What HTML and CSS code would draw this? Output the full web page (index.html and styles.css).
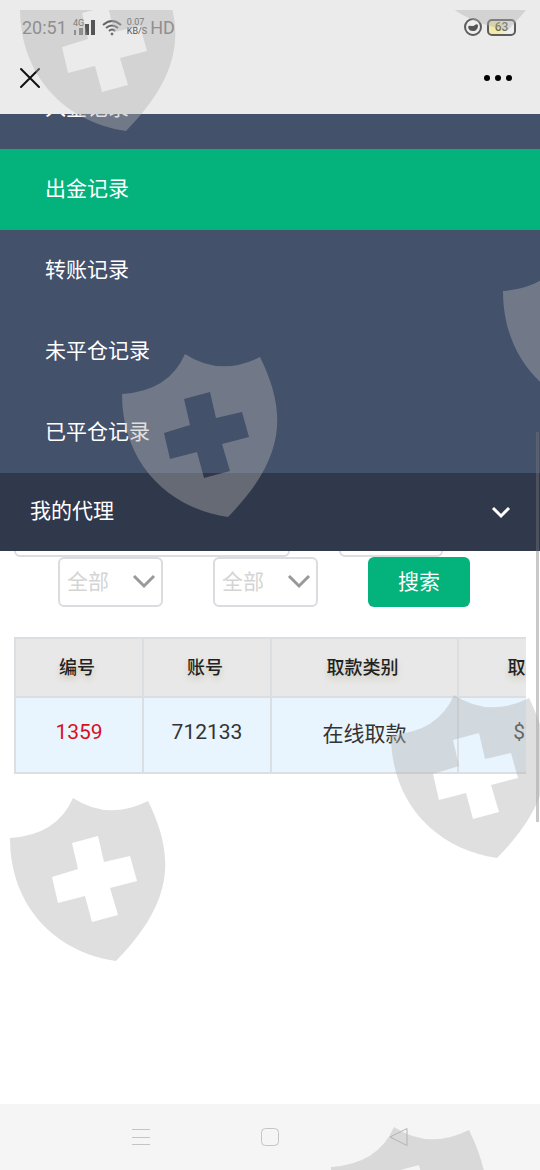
FILE: index.html
```html
<!DOCTYPE html>
<html lang="zh-CN">
<head>
    <meta charset="UTF-8">
    <meta name="viewport" content="width=device-width, initial-scale=1.0">
    <title>出金记录</title>
    <link rel="stylesheet" href="styles.css">
</head>
<body>
    <div class="status">
        <span class="time">20:51</span>
        <svg class="signal" width="24" height="18" viewBox="0 0 24 18">
            <text x="0" y="8" class="tiny">4G</text>
            <path d="M1 12h2v5H1zM6 10h4v7H6z" fill="#777"/>
            <path d="M12 6h4v11h-4zM18 2h4v15h-4z" fill="#555"/>
        </svg>
        <svg class="wifi" width="20" height="17" viewBox="0 0 20 17" fill="none" stroke="#666" stroke-width="2">
            <path d="M1 6Q10-2 19 6M4 9Q10 4 16 9M7 12Q10 9 13 12"/>
            <circle cx="10" cy="15" r="1" fill="#666" stroke-width="1"/>
        </svg>
        <span class="speed"><span>0.07</span><span>KB/S</span></span>
        <span class="hd">HD</span>
        <span class="space"></span>
        <svg class="eye" width="18" height="18" viewBox="0 0 18 18">
            <circle cx="9" cy="9" r="8" fill="#eee" stroke="#5c5c5c" stroke-width="2"/>
            <path d="M4 9C5 7 7 8 9 8C11 8 12 5 14 7C14 11 12 13 9 13S5 12 4 9Z" fill="#555"/>
        </svg>
        <span class="battery">63</span>
    </div>
    <header class="topbar">
        <button type="button" aria-label="关闭">
            <svg width="22" height="22" viewBox="0 0 22 22" stroke="#111" stroke-width="2" stroke-linecap="round">
                <path d="M2 2L20 20M20 2L2 20"/>
            </svg>
        </button>
        <button type="button" aria-label="更多">
            <svg width="28" height="8" viewBox="0 0 28 8">
                <circle cx="3" cy="4" r="3"/>
                <circle cx="14" cy="4" r="3"/>
                <circle cx="25" cy="4" r="3"/>
            </svg>
        </button>
    </header>
    <nav class="menu">
        <div class="submenu">
            <a href="#">入金记录</a>
            <a href="#" class="active">出金记录</a>
            <a href="#">转账记录</a>
            <a href="#">未平仓记录</a>
            <a href="#">已平仓记录</a>
        </div>
        <a href="#" class="group">
            <span>我的代理</span>
            <svg width="20" height="14" viewBox="0 0 20 14" fill="none" stroke="#fff" stroke-width="3">
                <path d="M2 3L10 11L18 3"/>
            </svg>
        </a>
    </nav>
    <main>
        <form>
            <div class="row first">
                <input type="text" class="range" aria-label="日期">
                <input type="text" class="short" aria-label="账号">
            </div>
            <div class="row second">
                <div class="select">
                    <select aria-label="取款类别"><option>全部</option></select>
                    <svg width="24" height="16" viewBox="0 0 24 16" fill="none" stroke="#999" stroke-width="3">
                        <path d="M2 3L12 13L22 3"/>
                    </svg>
                </div>
                <div class="select">
                    <select aria-label="状态"><option>全部</option></select>
                    <svg width="24" height="16" viewBox="0 0 24 16" fill="none" stroke="#999" stroke-width="3">
                        <path d="M2 3L12 13L22 3"/>
                    </svg>
                </div>
                <button type="submit" class="search">搜索</button>
            </div>
        </form>
        <div class="table-wrap">
            <table>
                <thead>
                    <tr>
                        <th class="col-s">编号</th>
                        <th class="col-s">账号</th>
                        <th class="col-l">取款类别</th>
                        <th class="col-m">取款金额</th>
                    </tr>
                </thead>
                <tbody>
                    <tr>
                        <td class="red">1359</td>
                        <td>712133</td>
                        <td>在线取款</td>
                        <td>$20.00</td>
                    </tr>
                </tbody>
            </table>
        </div>
    </main>
    <footer class="keys">
        <button type="button" aria-label="菜单">
            <svg width="20" height="20" viewBox="0 0 20 20" stroke="#c4c4c4" stroke-width="1">
                <path d="M1 2.5H19M1 10.5H19M1 17.5H19"/>
            </svg>
        </button>
        <button type="button" aria-label="主页">
            <svg width="20" height="20" viewBox="0 0 20 20" fill="none" stroke="#c4c4c4" stroke-width="1">
                <rect x="1.5" y="1.5" width="17" height="17" rx="4"/>
            </svg>
        </button>
        <button type="button" aria-label="返回">
            <svg width="20" height="20" viewBox="0 0 20 20" fill="none" stroke="#b4b4b4" stroke-width="1">
                <path d="M18 1.5V18.5L1 10Z"/>
            </svg>
        </button>
    </footer>

    <div class="scrollbar"></div>
    <div class="marks" aria-hidden="true">
        <svg width="0" height="0">
            <symbol id="shield" viewBox="0 0 160 166">
                <path fill-rule="evenodd" d="M0 40Q47 37 63 0Q98 23 138 3C164 56 166 102 106 163C45 154 0 108 0 40ZM62 45L68 71L42 79L48 105L75 98L82 124L108 117L100 90L127 83L120 58L94 64L88 38Z"/>
            </symbol>
        </svg>
        <svg class="mark m1"><use href="#shield"/></svg>
        <svg class="mark m2"><use href="#shield"/></svg>
        <svg class="mark m3"><use href="#shield"/></svg>
        <svg class="mark m4"><use href="#shield"/></svg>
        <svg class="mark m5"><use href="#shield"/></svg>
        <svg class="mark m6"><use href="#shield"/></svg>
        <svg class="mark m7"><use href="#shield"/></svg>
    </div>
</body>
</html>
```
FILE: styles.css
```css
* {
    box-sizing: border-box;
}
body {
    position: relative;
    display: flex;
    flex-direction: column;
    min-height: 100vh;
    margin: 0;
    background: #fff;
    color: #333;
    font-family: Roboto, "Noto Sans CJK SC", sans-serif;
    font-size: 21px;
    overflow-x: hidden;
}
button {
    padding: 0;
    border: none;
    background: none;
    cursor: pointer;
}
svg {
    display: block;
}
a {
    color: #fff;
    text-decoration: none;
}

/* status bar */
.status {
    display: flex;
    align-items: center;
    height: 54px;
    padding: 0 24px 0 22px;
    background: #ebebeb;
    color: #777;
    font-size: 18px;
}
.signal {
    margin-left: 6px;
}
.tiny {
    font-size: 9px;
    fill: #555;
}
.wifi {
    margin-left: 5px;
}
.speed {
    display: flex;
    flex-direction: column;
    margin: 0 3px 0 5px;
    font-size: 9px;
    line-height: 9px;
    color: #555;
}
.space {
    flex: 1;
}
.battery {
    width: 29px;
    height: 17px;
    margin-left: 5px;
    border: 2px solid #5c5c5c;
    border-radius: 5px;
    background: linear-gradient(90deg, #f3e9a8 40%, #eee 70%);
    color: #665;
    font-size: 12px;
    font-weight: 500;
    line-height: 13px;
    text-align: center;
}

.topbar {
    display: flex;
    align-items: center;
    justify-content: space-between;
    height: 60px;
    padding: 0 28px 12px 19px;
    background: #ebebeb;
}

/* menu */
.submenu {
    display: flex;
    flex-direction: column;
    justify-content: flex-end;
    height: 359px;
    overflow: hidden;
    background: #44516b;
}
.submenu a {
    flex: none;
    height: 81px;
    padding-left: 45px;
    line-height: 80px;
}
.submenu .active {
    background: #04b27c;
}
.group {
    display: flex;
    align-items: center;
    justify-content: space-between;
    height: 78px;
    padding: 0 29px 0 30px;
    background: #30384c;
}
.group span {
    line-height: 30px;
    padding-bottom: 2px;
}

main {
    flex: 1;
    padding: 0 14px;
}
.row {
    display: flex;
}
.first {
    align-items: flex-end;
    gap: 49px;
    height: 6px;
    overflow: hidden;
}
.first input {
    flex: none;
    height: 50px;
    border: 2px solid #dcdce2;
    border-radius: 6px;
}
.range {
    width: 276px;
}
.short {
    width: 104px;
}
.second {
    gap: 50px;
    padding-left: 44px;
}
.select {
    position: relative;
    width: 105px;
}
.select select {
    width: 100%;
    height: 50px;
    padding: 0 7px;
    border: 2px solid #dcdce0;
    border-radius: 6px;
    background: #fff;
    color: #d4d4d4;
    font-family: inherit;
    font-size: 21px;
    appearance: none;
}
.select svg {
    position: absolute;
    top: 16px;
    right: 7px;
    pointer-events: none;
}
.search {
    width: 102px;
    height: 50px;
    padding-bottom: 4px;
    border-radius: 6px;
    background: #04b27c;
    color: #fff;
    font-family: inherit;
    font-size: 21px;
}

.table-wrap {
    margin-top: 30px;
    overflow: hidden;
}
table {
    table-layout: fixed;
    width: 618px;
    border-collapse: collapse;
}
th, td {
    border: 2px solid #dcdfe2;
    text-align: center;
}
th {
    height: 59px;
    padding: 0 4px 4px 0;
    background: #e8e8e8;
    color: #222;
    font-size: 18px;
    font-weight: 500;
    text-shadow: 0 4px 6px #ccc8b8;
}
td {
    height: 76px;
    padding: 0 0 6px;
    background: #e8f5ff;
}
.col-s {
    width: 128px;
}
.col-l {
    width: 187px;
}
.col-m {
    width: 175px;
}
.red {
    color: #d8101c;
}

.keys {
    display: flex;
    justify-content: center;
    gap: 109px;
    height: 66px;
    background: #f5f5f5;
}

.scrollbar {
    position: absolute;
    top: 432px;
    right: 1px;
    width: 3px;
    height: 390px;
    background: rgba(120, 120, 120, 0.4);
}

/* watermark */
.marks {
    position: absolute;
    top: 10px;
    right: 0;
    bottom: 0;
    left: 0;
    overflow: hidden;
    pointer-events: none;
}
.mark {
    position: absolute;
    width: 160px;
    height: 166px;
    fill: rgba(177, 177, 177, 0.41);
}
.m1 {
    top: -42px;
    left: 20px;
}
.m2 {
    top: -143px;
    left: 402px;
}
.m3 {
    top: 241px;
    left: 503px;
}
.m4 {
    top: 344px;
    left: 122px;
}
.m5 {
    top: 685px;
    left: 391px;
}
.m6 {
    top: 788px;
    left: 10px;
}
.m7 {
    top: 1117px;
    left: 331px;
}
```
